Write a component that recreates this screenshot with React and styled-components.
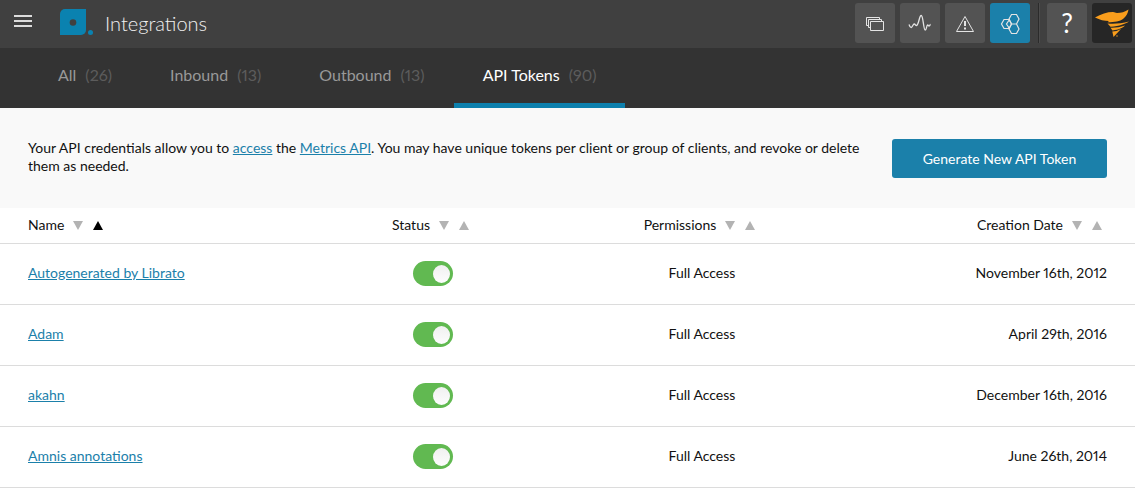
import React from 'react';
import styled, { createGlobalStyle } from 'styled-components';

const tabs = [
  { label: 'All', count: 26 },
  { label: 'Inbound', count: 13 },
  { label: 'Outbound', count: 13 },
  { label: 'API Tokens', count: 90, active: true },
];

const columns = [
  { label: 'Name', align: 'left', width: '26.3%', sorted: 'asc' },
  { label: 'Status', align: 'center', width: '23.7%' },
  { label: 'Permissions', align: 'center', width: '23.7%' },
  { label: 'Creation Date', align: 'right', width: '26.3%' },
];

const tokens = [
  { name: 'Autogenerated by Librato', access: 'Full Access', created: 'November 16th, 2012' },
  { name: 'Adam', access: 'Full Access', created: 'April 29th, 2016' },
  { name: 'akahn', access: 'Full Access', created: 'December 16th, 2016' },
  { name: 'Amnis annotations', access: 'Full Access', created: 'June 26th, 2014' },
];

const App = () => {
  return (
    <>
      <GlobalStyle />
      <Header>
        <MenuButton type="button" aria-label="Menu">
          <svg width="18" height="12" viewBox="0 0 18 12" fill="#dcdcdc">
            <path d="M0 0h18v2H0zM0 5h18v2H0zM0 10h18v2H0z" />
          </svg>
        </MenuButton>
        <Logo width="34" height="26" viewBox="0 0 34 26" aria-hidden="true">
          <path d="M5 0h21v21a5 5 0 0 1-5 5H0V5a5 5 0 0 1 5-5z" fill="#0a82b0" />
          <circle cx="13" cy="13.5" r="3.3" fill="#404040" />
          <circle cx="30.5" cy="23.5" r="2.5" fill="#0a82b0" />
        </Logo>
        <Title>Integrations</Title>
        <Tools>
          <ToolButton type="button" aria-label="Spaces">
            <Icon>
              <path d="M24.5 16v-1.5h-13v8H13M26.5 18v-1.5h-13v8H15" />
              <path d="M15.5 18.5h13v9h-13z" />
            </Icon>
          </ToolButton>
          <ToolButton type="button" aria-label="Metrics">
            <Icon>
              <path
                d="M9 21.5c.5 1.5 1 3 2.2 3s1.800-3.500 3-3.500 1.200 1.500 2.200 1.500c2.400 0 2.700-10 4.800-10s2.200 14.500 4 14.500c1.400 0 1.300-5 2.400-5 .8 0 .8 1 1.500 1s1-1.500 1.500-1.500"
                strokeWidth="1.3"
              />
            </Icon>
          </ToolButton>
          <ToolButton type="button" aria-label="Alerts">
            <Icon>
              <path d="M20 13.5l8.500 15h-17z" strokeLinejoin="round" />
              <path d="M20 18v5M20 24.5v2" strokeWidth="2" />
            </Icon>
          </ToolButton>
          <ToolButton type="button" aria-label="Integrations" $active>
            <Icon>
              <path
                d="M21.5 11.5h5L29 16l-2.500 5h-5L19 16zM21.5 21h5l2.500 5-2.500 4.500h-5L19 26z"
                strokeWidth="1.2"
              />
              <path
                d="M14 16.500h5l2.500 4.500-2.500 4.500h-5L11.500 21zM19.500 16.500L16.500 21l3 4.500"
                strokeWidth="1.2"
              />
            </Icon>
          </ToolButton>
          <Divider />
          <ToolButton type="button" aria-label="Help">?</ToolButton>
          <ToolButton type="button" aria-label="Account" $dark>
            <svg width="40" height="40" viewBox="0 0 40 40" fill="#f99d1c">
              <path d="M3 14.500C9 11 15 9 21 9c2 0 2 1 4 1 4 0 8-1 11.500-3.500C36 10 34.500 13 31 16c-3 2.500-8 3.200-15.500 3.200l1.500-1.200c-5 0-9-1-14-3.500z" />
              <path d="M15.500 20.500c7 .5 14 0 21.500-2-4 2.500-9 4.500-18.500 5.300z" />
              <path d="M18.500 24.700c5 .2 9-.5 14.500-2.200-2.500 2.500-6 4-12.500 5z" />
              <path d="M20.300 28.500c3 0 5.500-.8 8.700-2.500L21.500 34z" />
              <circle cx="25" cy="33" r=".7" />
            </svg>
          </ToolButton>
        </Tools>
      </Header>

      <TabBar>
        {tabs.map((tab) => (
          <Tab key={tab.label} href="#" $active={tab.active}>
            {tab.label}
            <Count>({tab.count})</Count>
          </Tab>
        ))}
      </TabBar>

      <Intro>
        <IntroText>
          Your API credentials allow you to <TextLink href="#">access</TextLink> the{' '}
          <TextLink href="#">Metrics API</TextLink>. You may have unique tokens per client or group
          of clients, and revoke or delete them as needed.
        </IntroText>
        <PrimaryButton type="button">Generate New API Token</PrimaryButton>
      </Intro>

      <Table>
        <thead>
          <tr>
            {columns.map((col) => (
              <HeadCell key={col.label} $align={col.align} $width={col.width}>
                {col.label}
                <SortButton type="button" aria-label={`Sort ${col.label} descending`}>
                  <svg width="10" height="9" viewBox="0 0 10 9">
                    <path d="M0 0h10L5 9z" />
                  </svg>
                </SortButton>
                <SortButton
                  type="button"
                  aria-label={`Sort ${col.label} ascending`}
                  $active={col.sorted === 'asc'}
                >
                  <svg width="10" height="9" viewBox="0 0 10 9">
                    <path d="M0 9h10L5 0z" />
                  </svg>
                </SortButton>
              </HeadCell>
            ))}
          </tr>
        </thead>
        <tbody>
          {tokens.map((token) => (
            <tr key={token.name}>
              <Cell>
                <TextLink href="#">{token.name}</TextLink>
              </Cell>
              <Cell $align="center">
                <Switch type="checkbox" defaultChecked aria-label={`${token.name} status`} />
              </Cell>
              <Cell $align="center">{token.access}</Cell>
              <Cell $align="right">{token.created}</Cell>
            </tr>
          ))}
        </tbody>
      </Table>
    </>
  );
};

const Icon = ({ children }) => (
  <svg width="40" height="40" viewBox="0 0 40 40" fill="none" stroke="#e4e4e4">
    {children}
  </svg>
);

const GlobalStyle = createGlobalStyle`
  * {
    box-sizing: border-box;
  }

  body {
    margin: 0;
    background: #fff;
    color: #111;
    font-family: Lato, 'Open Sans', sans-serif;
    font-size: 14px;
    line-height: 18px;
    font-variant-numeric: proportional-nums;
  }

  button {
    font-family: inherit;
    cursor: pointer;
  }
`;

const Header = styled.header`
  display: flex;
  align-items: center;
  height: 48px;
  padding: 0 3px 2px 14px;
  background: #404040;
`;

const MenuButton = styled.button`
  display: flex;
  padding: 0;
  border: 0;
  background: none;
  margin: 0 28px 4px 0;
`;

const Logo = styled.svg`
  flex: none;
  margin-bottom: 2px;
`;

const Title = styled.h1`
  margin: 0 0 0 11px;
  color: #f0f0f0;
  font-size: 20px;
  line-height: 24px;
  font-weight: 300;
`;

const Tools = styled.div`
  display: flex;
  gap: 5px;
  margin-left: auto;
`;

const ToolButton = styled.button`
  display: flex;
  align-items: center;
  justify-content: center;
  width: 40px;
  height: 40px;
  padding: 0;
  border: 0;
  border-radius: 3px;
  background: ${(p) => (p.$active ? '#1b80aa' : p.$dark ? '#262626' : '#535353')};
  color: #fff;
  font-size: 26px;
  line-height: 40px;
`;

const Divider = styled.span`
  width: 2px;
  margin: 0 2px 0 3px;
  border-left: 1px solid #2b2b2b;
  border-right: 1px solid #4c4c4c;
`;

const TabBar = styled.nav`
  display: flex;
  height: 60px;
  padding-left: 29px;
  background: #333;
`;

const Tab = styled.a`
  padding: 17px 29px 0;
  border-bottom: 5px solid ${(p) => (p.$active ? '#0d80ad' : 'transparent')};
  color: ${(p) => (p.$active ? '#fff' : '#999')};
  font-size: 16px;
  line-height: 20px;
  text-decoration: none;
`;

const Count = styled.span`
  margin-left: 9px;
  color: #5c5c5c;
`;

const Intro = styled.section`
  display: flex;
  align-items: flex-start;
  justify-content: space-between;
  gap: 28px;
  padding: 31px 28px 30px;
  background: #f9f9f9;
`;

const IntroText = styled.p`
  margin: 0;
`;

const TextLink = styled.a`
  color: #1b80aa;
  text-decoration: underline;
`;

const PrimaryButton = styled.button`
  flex: none;
  min-width: 215px;
  height: 39px;
  padding: 0 30px;
  border: 0;
  border-radius: 3px;
  background: #1b80aa;
  color: #fff;
  font-size: 14px;
`;

const Table = styled.table`
  width: 100%;
  table-layout: fixed;
  border-spacing: 0;
`;

const HeadCell = styled.th`
  width: ${(p) => p.$width};
  height: 36px;
  padding: 0 ${(p) => (p.$align === 'right' ? 28 : 0)}px 2px
    ${(p) => (p.$align === 'left' ? 28 : 0)}px;
  border-bottom: 1px solid #dcdcdc;
  font-weight: 400;
  text-align: ${(p) => p.$align};
`;

const SortButton = styled.button`
  padding: 0;
  border: 0;
  background: none;
  margin: 0 5px;
  fill: ${(p) => (p.$active ? '#000' : '#b3b3b3')};

  ${HeadCell} > &:first-of-type {
    margin-left: 9px;
  }
`;

const Cell = styled.td`
  height: 61px;
  padding: 0 ${(p) => (p.$align === 'right' ? 28 : 0)}px 2px ${(p) => (p.$align ? 0 : 28)}px;
  border-bottom: 1px solid #dcdcdc;
  text-align: ${(p) => p.$align || 'left'};
`;

const Switch = styled.input`
  appearance: none;
  display: block;
  width: 40px;
  height: 25px;
  margin: 0 auto;
  padding: 4px 3px;
  border-radius: 13px;
  background: #ccc;
  cursor: pointer;

  &::before {
    content: '';
    display: block;
    width: 17px;
    height: 18px;
    border-radius: 50%;
    background: linear-gradient(#f0f0f0, #fdfdfd);
  }

  &:checked {
    background: #61b951;
  }

  &:checked::before {
    margin-left: auto;
  }
`;

export default App;
